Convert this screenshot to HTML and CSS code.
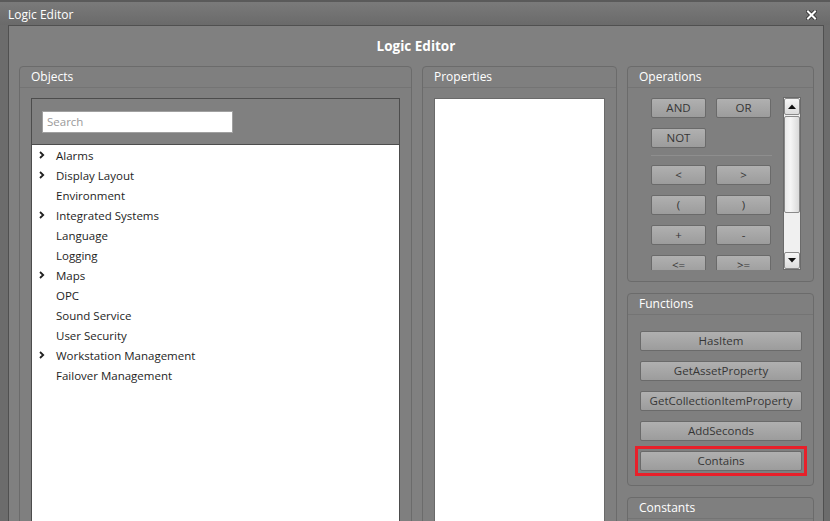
FILE: index.html
```html
<!DOCTYPE html>
<html>
<head>
<meta charset="utf-8">
<link rel="stylesheet" href="styles.css">
</head>
<body>
<div class="titlebar">
  <span class="title-text">Logic Editor</span>
  <svg class="close" width="11" height="10" viewBox="0 0 11 10"><path d="M2 1.5 L9 8.5 M9 1.5 L2 8.5" stroke="#3a3a3a" stroke-width="4" stroke-linecap="square"/><path d="M2 1.5 L9 8.5 M9 1.5 L2 8.5" stroke="#ffffff" stroke-width="2" stroke-linecap="square"/></svg>
</div>
<div class="window">
  <div class="dlg-title">Logic Editor</div>
  <div class="columns">
    <div class="panel objects">
      <div class="panel-head">Objects</div>
      <div class="obj-box">
        <div class="search-area"><div class="search">Search</div></div>
        <ul class="tree">
          <li><span class="chev"><svg width="6" height="8" viewBox="0 0 6 8"><path d="M1 1 L4.2 4 L1 7" fill="none" stroke="#222" stroke-width="1.8"/></svg></span>Alarms</li>
          <li><span class="chev"><svg width="6" height="8" viewBox="0 0 6 8"><path d="M1 1 L4.2 4 L1 7" fill="none" stroke="#222" stroke-width="1.8"/></svg></span>Display Layout</li>
          <li><span class="chev"></span>Environment</li>
          <li><span class="chev"><svg width="6" height="8" viewBox="0 0 6 8"><path d="M1 1 L4.2 4 L1 7" fill="none" stroke="#222" stroke-width="1.8"/></svg></span>Integrated Systems</li>
          <li><span class="chev"></span>Language</li>
          <li><span class="chev"></span>Logging</li>
          <li><span class="chev"><svg width="6" height="8" viewBox="0 0 6 8"><path d="M1 1 L4.2 4 L1 7" fill="none" stroke="#222" stroke-width="1.8"/></svg></span>Maps</li>
          <li><span class="chev"></span>OPC</li>
          <li><span class="chev"></span>Sound Service</li>
          <li><span class="chev"></span>User Security</li>
          <li><span class="chev"><svg width="6" height="8" viewBox="0 0 6 8"><path d="M1 1 L4.2 4 L1 7" fill="none" stroke="#222" stroke-width="1.8"/></svg></span>Workstation Management</li>
          <li><span class="chev"></span>Failover Management</li>
        </ul>
      </div>
    </div>
    <div class="panel props">
      <div class="panel-head">Properties</div>
      <div class="props-box"></div>
    </div>
    <div class="right-col">
      <div class="panel ops">
        <div class="panel-head">Operations</div>
        <div class="ops-body">
          <div class="ops-list">
            <div class="ops-row"><div class="btn op">AND</div><div class="btn op">OR</div></div>
            <div class="ops-row"><div class="btn op">NOT</div></div>
            <div class="sep"></div>
            <div class="ops-row"><div class="btn op">&lt;</div><div class="btn op">&gt;</div></div>
            <div class="ops-row"><div class="btn op">(</div><div class="btn op">)</div></div>
            <div class="ops-row"><div class="btn op">+</div><div class="btn op">-</div></div>
            <div class="ops-row"><div class="btn op">&lt;=</div><div class="btn op">&gt;=</div></div>
          </div>
          <div class="scrollbar">
            <div class="sb-btn"><svg width="8" height="5" viewBox="0 0 8 5"><path d="M0 5 L4 0.5 L8 5Z" fill="#111"/></svg></div>
            <div class="sb-thumb"></div>
            <div class="sb-track"></div>
            <div class="sb-btn"><svg width="8" height="5" viewBox="0 0 8 5"><path d="M0 0 L4 4.5 L8 0Z" fill="#111"/></svg></div>
          </div>
        </div>
      </div>
      <div class="panel funcs">
        <div class="panel-head">Functions</div>
        <div class="funcs-body">
          <div class="btn fn">HasItem</div>
          <div class="btn fn">GetAssetProperty</div>
          <div class="btn fn">GetCollectionItemProperty</div>
          <div class="btn fn">AddSeconds</div>
          <div class="highlight-frame"><div class="btn fn">Contains</div></div>
        </div>
      </div>
      <div class="panel consts">
        <div class="panel-head">Constants</div>
      </div>
    </div>
  </div>
</div>
</body>
</html>
```
FILE: styles.css
```css
* { box-sizing: border-box; }
html, body {
  margin: 0;
  padding: 0;
}
body {
  width: 830px;
  height: 521px;
  overflow: hidden;
  background: #6c6c6c;
  font-family: "Open Sans", "Noto Sans", sans-serif;
  font-size: 11.5px;
  color: #ffffff;
}
.titlebar {
  height: 25px;
  display: flex;
  align-items: center;
  padding-left: 8px;
  padding-right: 13px;
  background: linear-gradient(#7a7a7a, #6a6a6a);
  border-top: 2px solid #5a5a5a;
}
.title-text {
  flex: 1;
  font-size: 12px;
  color: #ffffff;
  padding-top: 1px;
}
.close { margin-top: 2px; }
.window {
  margin-left: 8px;
  width: 816px;
  height: 496px;
  background: #808080;
  border: 1px solid #505050;
  border-bottom: none;
  overflow: hidden;
}
.dlg-title {
  height: 40px;
  text-align: center;
  font-weight: bold;
  font-size: 13.5px;
  line-height: 40px;
}
.columns {
  display: flex;
  gap: 10px;
  padding-left: 10px;
  align-items: flex-start;
}
.panel {
  border: 1px solid #6b6b6b;
  border-radius: 4px;
  background: #7f7f7f;
}
.panel-head {
  height: 21px;
  line-height: 20px;
  padding-left: 11px;
  border-bottom: 1px solid #747474;
  font-size: 12px;
  color: #ffffff;
}
.objects {
  width: 393px;
  height: 480px;
}
.obj-box {
  margin: 10px 11px 0 11px;
  height: 460px;
  border: 1px solid #4c4c4c;
  background: #ffffff;
}
.search-area {
  height: 46px;
  background: #808080;
  border-bottom: 1px solid #4c4c4c;
  padding: 12px 0 0 10px;
}
.search {
  width: 191px;
  height: 22px;
  background: #ffffff;
  border: 1px solid #a0a0a0;
  color: #9a9a9a;
  font-size: 11.5px;
  line-height: 20px;
  padding-left: 4px;
}
.tree {
  list-style: none;
  margin: 0;
  padding: 0;
  color: #1e1e1e;
}
.tree li {
  height: 20px;
  display: flex;
  align-items: center;
  font-size: 11.5px;
}
.chev {
  width: 24px;
  padding-left: 7px;
  display: flex;
  align-items: center;
}
.props {
  width: 195px;
  height: 480px;
}
.props-box {
  margin: 10px 11px 0 11px;
  height: 460px;
  background: #ffffff;
  border: 1px solid #6a6a6a;
}
.right-col {
  width: 187px;
  display: flex;
  flex-direction: column;
  gap: 11px;
}
.ops { height: 216px; }
.ops-body {
  display: flex;
  padding: 10px 0 0 23px;
  height: 183px;
}
.ops-list {
  width: 121px;
  height: 172px;
  overflow: hidden;
  display: flex;
  flex-direction: column;
  gap: 10px;
}
.ops-row {
  display: flex;
  gap: 10px;
  flex: none;
}
.btn {
  height: 20px;
  border: 1px solid #6a6a6a;
  border-radius: 2px;
  background: linear-gradient(#b0b0b0, #9c9c9c);
  color: #363636;
  font-size: 11.5px;
  text-align: center;
  line-height: 18px;
  flex: none;
}
.op { width: 55px; }
.sep {
  height: 1px;
  width: 121px;
  background: #5e5e5e;
  border-bottom: 1px solid #8e8e8e;
  margin: -3px 0 -1px 0;
  flex: none;
}
.scrollbar {
  margin-left: 11px;
  margin-top: -1px;
  width: 18px;
  height: 173px;
  background: #f0f0f0;
  border: 1px solid #6a6a6a;
  display: flex;
  flex-direction: column;
}
.sb-btn {
  height: 17px;
  display: flex;
  align-items: center;
  justify-content: center;
  background: linear-gradient(#f7f7f7, #dcdcdc);
  border: 1px solid #8a8a8a;
  border-radius: 2px;
  flex: none;
}
.sb-thumb {
  height: 97px;
  margin-top: 1px;
  background: linear-gradient(90deg, #e9e9e9, #f6f6f6 40%, #dadada);
  border: 1px solid #8a8a8a;
  border-radius: 2px;
  flex: none;
}
.sb-track { flex: 1; }
.funcs { height: 193px; }
.funcs-body {
  padding: 16px 11px 0 12px;
  display: flex;
  flex-direction: column;
  gap: 10px;
}
.fn { width: 162px; }
.highlight-frame {
  margin: -5px -5px;
  padding: 2px;
  border: 3px solid #e8202a;
  width: 172px;
}
.consts { height: 40px; }
```
